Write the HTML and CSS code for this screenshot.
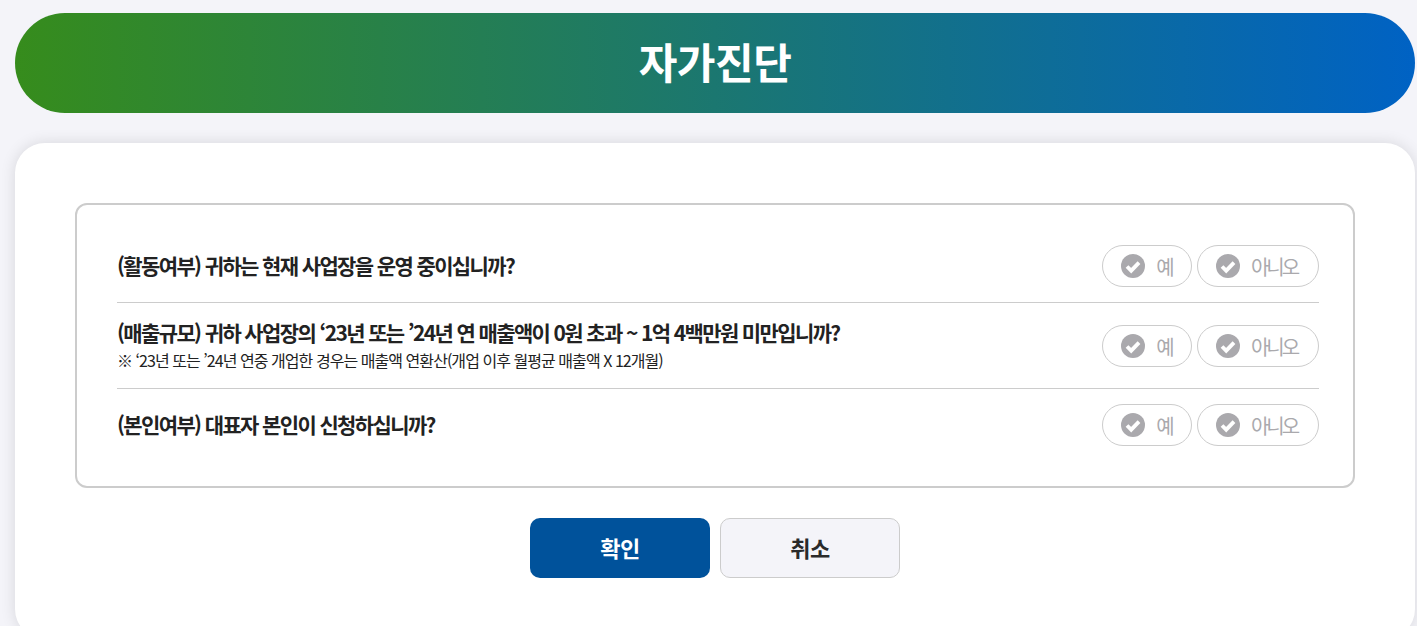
FILE: index.html
```html
<!DOCTYPE html>
<html lang="ko">
<head>
    <meta charset="UTF-8">
    <meta name="viewport" content="width=device-width, initial-scale=1.0">
    <title>자가진단</title>
    <link rel="stylesheet" href="styles.css">
</head>
<body>
    <h1 class="page-title">자가진단</h1>

    <div class="card">
        <div class="check-box">
            <div class="check-row">
                <div class="question">
                    <p class="q-text">(활동여부) 귀하는 현재 사업장을 운영 중이십니까?</p>
                </div>
                <div class="answers">
                    <button class="answer answer-yes"><svg class="check" viewBox="0 0 24 24"><circle cx="12" cy="12" r="12"/><path d="M6 12.5l4.2 4.2 7.8-8"/></svg>예</button>
                    <button class="answer answer-no"><svg class="check" viewBox="0 0 24 24"><circle cx="12" cy="12" r="12"/><path d="M6 12.5l4.2 4.2 7.8-8"/></svg>아니오</button>
                </div>
            </div>
            <div class="check-row">
                <div class="question">
                    <p class="q-text">(매출규모) 귀하 사업장의 ‘23년 또는 ’24년 연 매출액이 0원 초과 ~ 1억 4백만원 미만입니까?</p>
                    <p class="q-note">※ ‘23년 또는 ’24년 연중 개업한 경우는 매출액 연환산(개업 이후 월평균 매출액 X 12개월)</p>
                </div>
                <div class="answers">
                    <button class="answer answer-yes"><svg class="check" viewBox="0 0 24 24"><circle cx="12" cy="12" r="12"/><path d="M6 12.5l4.2 4.2 7.8-8"/></svg>예</button>
                    <button class="answer answer-no"><svg class="check" viewBox="0 0 24 24"><circle cx="12" cy="12" r="12"/><path d="M6 12.5l4.2 4.2 7.8-8"/></svg>아니오</button>
                </div>
            </div>
            <div class="check-row">
                <div class="question">
                    <p class="q-text">(본인여부) 대표자 본인이 신청하십니까?</p>
                </div>
                <div class="answers">
                    <button class="answer answer-yes"><svg class="check" viewBox="0 0 24 24"><circle cx="12" cy="12" r="12"/><path d="M6 12.5l4.2 4.2 7.8-8"/></svg>예</button>
                    <button class="answer answer-no"><svg class="check" viewBox="0 0 24 24"><circle cx="12" cy="12" r="12"/><path d="M6 12.5l4.2 4.2 7.8-8"/></svg>아니오</button>
                </div>
            </div>
        </div>

        <div class="btn-area">
            <button class="btn btn-ok">확인</button>
            <button class="btn btn-cancel">취소</button>
        </div>
    </div>
</body>
</html>
```

FILE: styles.css
```css
* {
    box-sizing: border-box;
}
html, body {
    height: 626px;
    overflow: hidden;
}
body {
    margin: 0;
    padding: 13px 2px 0 15px;
    background-color: #f4f4f9;
    color: #222;
    font-family: "Noto Sans CJK KR", "Noto Sans", sans-serif;
}
.page-title {
    margin: 0;
    height: 100px;
    line-height: 96px;
    border-radius: 50px;
    background: linear-gradient(90deg, #368c1c 0%, #0062c4 100%);
    color: #fff;
    text-align: center;
    font-size: 42px;
    font-weight: 700;
    letter-spacing: -0.5px;
}
.card {
    margin-top: 30px;
    padding: 60px 60px 0;
    height: 496px;
    background-color: #fff;
    border-radius: 30px;
    box-shadow: 0 0 15px rgba(0, 0, 0, 0.12);
}
.check-box {
    padding: 25px 34px 25px 40px;
    border: 2px solid #ccc;
    border-radius: 12px;
}
.check-row {
    display: flex;
    align-items: center;
    justify-content: space-between;
    padding: 15px 0;
    border-bottom: 1px solid #ccc;
}
.check-row:last-child {
    border-bottom: none;
}
.check-row:nth-child(2) {
    padding: 14px 0 13px;
}
.question {
    padding-bottom: 2px;
}
.q-text {
    margin: 0;
    font-size: 21px;
    font-weight: 700;
    line-height: 30px;
    letter-spacing: -1.62px;
}
.q-note {
    margin: 0;
    font-size: 16px;
    font-weight: 400;
    line-height: 26px;
    letter-spacing: -0.95px;
}
.answers {
    display: flex;
    gap: 5px;
}
.answer {
    display: flex;
    align-items: center;
    justify-content: center;
    gap: 11px;
    height: 42px;
    padding: 0 3px 0 0;
    background-color: #fff;
    border: 1px solid #ccc;
    border-radius: 21px;
    color: #aaa9ad;
    font-family: inherit;
    font-size: 20px;
    font-weight: 400;
    letter-spacing: -3px;
}
.answer-yes {
    width: 90px;
    padding-right: 1px;
}
.answer-no {
    width: 122px;
}
.check {
    width: 24px;
    height: 24px;
    flex-shrink: 0;
}
.check circle {
    fill: #aaa9ad;
}
.check path {
    fill: none;
    stroke: #fff;
    stroke-width: 3.8;
}
.btn-area {
    display: flex;
    justify-content: center;
    gap: 10px;
    margin-top: 30px;
}
.btn {
    width: 180px;
    height: 60px;
    padding: 0 0 3px;
    border-radius: 10px;
    font-family: inherit;
    font-size: 22px;
    font-weight: 700;
    letter-spacing: -0.5px;
}
.btn-ok {
    background-color: #00529b;
    border: none;
    color: #fff;
}
.btn-cancel {
    background-color: #f4f4f9;
    border: 1px solid #ccc;
    color: #2a2a2a;
}
```
